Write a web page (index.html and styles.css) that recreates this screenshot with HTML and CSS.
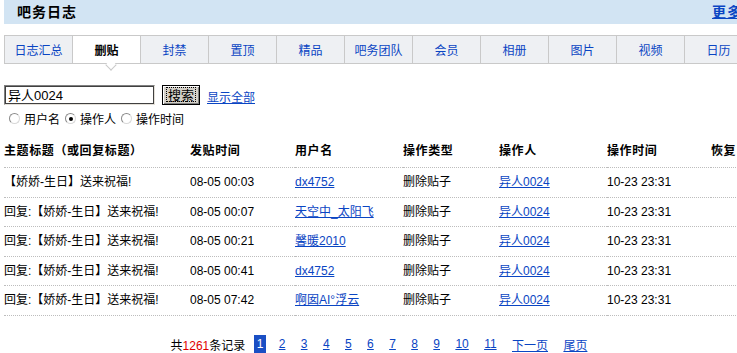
FILE: index.html
```html
<!DOCTYPE html>
<html lang="zh-CN">
<head>
<meta charset="utf-8">
<title>吧务日志</title>
<link rel="stylesheet" href="styles.css">
</head>
<body>
<div class="page">
  <div class="hd">
    <span class="hd-title">吧务日志</span>
    <a class="hd-more" href="#">更多</a>
  </div>

  <ul class="tabs">
    <li class="tab"><a href="#">日志汇总</a></li>
    <li class="tab active"><span>删贴</span><i class="caret"></i></li>
    <li class="tab"><a href="#">封禁</a></li>
    <li class="tab"><a href="#">置顶</a></li>
    <li class="tab"><a href="#">精品</a></li>
    <li class="tab"><a href="#">吧务团队</a></li>
    <li class="tab"><a href="#">会员</a></li>
    <li class="tab"><a href="#">相册</a></li>
    <li class="tab"><a href="#">图片</a></li>
    <li class="tab"><a href="#">视频</a></li>
    <li class="tab"><a href="#">日历</a></li>
  </ul>

  <form class="search">
    <div class="search-row">
      <input class="search-input" type="text" value="异人0024">
      <button class="search-btn" type="button"><span>搜索</span></button>
      <a class="show-all" href="#">显示全部</a>
    </div>
    <div class="radio-row">
      <label><input type="radio" name="t" class="radio">用户名</label>
      <label><input type="radio" name="t" class="radio" checked>操作人</label>
      <label><input type="radio" name="t" class="radio">操作时间</label>
    </div>
  </form>

  <table class="log">
    <colgroup>
      <col class="c1"><col class="c2"><col class="c3"><col class="c4"><col class="c5"><col class="c6"><col class="c7">
    </colgroup>
    <thead>
      <tr><th>主题标题（或回复标题）</th><th>发贴时间</th><th>用户名</th><th>操作类型</th><th>操作人</th><th>操作时间</th><th>恢复</th></tr>
    </thead>
    <tbody>
      <tr><td>【娇娇-生日】送来祝福!</td><td>08-05 00:03</td><td><a href="#">dx4752</a></td><td>删除贴子</td><td><a href="#">异人0024</a></td><td>10-23 23:31</td><td></td></tr>
      <tr><td>回复:【娇娇-生日】送来祝福!</td><td>08-05 00:07</td><td><a href="#">天空中_太阳飞</a></td><td>删除贴子</td><td><a href="#">异人0024</a></td><td>10-23 23:31</td><td></td></tr>
      <tr><td>回复:【娇娇-生日】送来祝福!</td><td>08-05 00:21</td><td><a href="#">馨暖2010</a></td><td>删除贴子</td><td><a href="#">异人0024</a></td><td>10-23 23:31</td><td></td></tr>
      <tr><td>回复:【娇娇-生日】送来祝福!</td><td>08-05 00:41</td><td><a href="#">dx4752</a></td><td>删除贴子</td><td><a href="#">异人0024</a></td><td>10-23 23:31</td><td></td></tr>
      <tr><td>回复:【娇娇-生日】送来祝福!</td><td>08-05 07:42</td><td><a href="#">啊囡AI°浮云</a></td><td>删除贴子</td><td><a href="#">异人0024</a></td><td>10-23 23:31</td><td></td></tr>
    </tbody>
  </table>

  <div class="pager">
    <span class="total">共<em>1261</em>条记录</span>
    <span class="cur">1</span>
    <a href="#">2</a><a href="#">3</a><a href="#">4</a><a href="#">5</a><a href="#">6</a><a href="#">7</a><a href="#">8</a><a href="#">9</a><a href="#">10</a><a href="#">11</a><a href="#">下一页</a><a href="#">尾页</a>
  </div>
</div>
</body>
</html>
```

FILE: styles.css
```css
html, body {
  margin: 0;
  padding: 0;
  background: #fff;
  overflow: hidden;
}
body {
  font-family: "Liberation Sans", "Noto Sans CJK SC", sans-serif;
  font-size: 12px;
  color: #000;
}
a {
  color: #0a45c3;
  text-decoration: underline;
}
.page {
  width: 756px;
  margin-left: 4px;
}

/* header */
.hd {
  height: 24px;
  background: #d2e4f3;
  display: flex;
  align-items: center;
  justify-content: space-between;
  padding: 0 18px 0 13px;
  box-sizing: border-box;
}
.hd-title {
  font-size: 14px;
  font-weight: bold;
  line-height: 16px;
  letter-spacing: 1px;
}
.hd-more {
  font-size: 14px;
  font-weight: bold;
  line-height: 16px;
  letter-spacing: 1px;
}

/* tabs */
.tabs {
  list-style: none;
  margin: 11px 0 0;
  padding: 0;
  display: flex;
  height: 27px;
  border-top: 1px solid #c9c9c9;
  border-bottom: 1px solid #c9c9c9;
  border-left: 1px solid #c9c9c9;
}
.tab {
  position: relative;
  width: 68px;
  flex: none;
  box-sizing: border-box;
  border-right: 1px solid #c9c9c9;
  background: #eef0f3;
  display: flex;
  align-items: center;
  justify-content: center;
  font-size: 12px;
}
.tab a {
  text-decoration: none;
}
.tab.active {
  background: #fff;
  font-weight: bold;
}
.caret {
  position: absolute;
  left: 34px;
  bottom: -6px;
  width: 7px;
  height: 7px;
  background: #fff;
  border-right: 1px solid #c9c9c9;
  border-bottom: 1px solid #c9c9c9;
  transform: rotate(45deg);
}

/* search */
.search {
  margin: 20px 0 0;
}
.search-row {
  display: flex;
  align-items: center;
  height: 21px;
}
.search-input {
  width: 151px;
  height: 20px;
  box-sizing: border-box;
  margin: 0;
  padding: 0 2px;
  font-family: "Liberation Sans", "Noto Sans CJK SC", sans-serif;
  font-size: 13px;
  border: 2px solid;
  border-color: #808080 #e4e0d8 #e4e0d8 #808080;
  outline: 1px solid #404040;
  outline-offset: -2px;
  background: #fff;
}
.search-btn {
  margin: 0 0 0 7px;
  width: 38px;
  height: 20px;
  padding: 2px;
  box-sizing: border-box;
  background: #d4d0c8;
  border: 1px solid #000;
  box-shadow: inset 1px 1px #fff, inset -1px -1px #808080;
  font-family: "Noto Sans CJK SC", sans-serif;
  font-size: 13px;
  line-height: 13px;
  display: flex;
  align-items: center;
  justify-content: center;
}
.search-btn span {
  display: block;
  border: 1px dotted #000;
  padding: 0 1px;
  line-height: 13px;
}
.show-all {
  margin-left: 7px;
  align-self: flex-end;
  line-height: 14px;
}
.radio-row {
  display: flex;
  align-items: center;
  height: 16px;
  margin-top: 5px;
}
.radio-row label {
  display: flex;
  align-items: center;
}
.radio {
  appearance: none;
  -webkit-appearance: none;
  width: 11px;
  height: 11px;
  margin: 0 4px 0 5px;
  border: 1px solid #8a8a8a;
  border-right-color: #d8d8d8;
  border-bottom-color: #d8d8d8;
  border-radius: 50%;
  background: #fff;
  position: relative;
}
.radio:checked::after {
  content: "";
  position: absolute;
  left: 3px;
  top: 3px;
  width: 4px;
  height: 4px;
  border-radius: 50%;
  background: #000;
}

/* table */
.log {
  width: 756px;
  table-layout: fixed;
  border-collapse: collapse;
  margin-top: 13px;
}
.c1 { width: 186px; }
.c2 { width: 105px; }
.c3 { width: 108px; }
.c4 { width: 96px; }
.c5 { width: 108px; }
.c6 { width: 104px; }
.log th {
  text-align: left;
  font-weight: bold;
  padding: 4px 0 8px;
  height: 16px;
  line-height: 16px;
  letter-spacing: 0.6px;
  border-bottom: 1px dotted #bdbdbd;
  white-space: nowrap;
  overflow: hidden;
}
.log td {
  height: 28.5px;
  padding: 0;
  line-height: 16px;
  vertical-align: middle;
  border-bottom: 1px dotted #bdbdbd;
  white-space: nowrap;
  overflow: hidden;
}

/* pager */
.pager {
  display: flex;
  align-items: center;
  justify-content: center;
  margin-top: 19px;
  padding-right: 6px;
  height: 19px;
  gap: 15.4px;
}
.total em {
  font-style: normal;
  color: #e00000;
}
.cur {
  background: #1a4fc4;
  color: #fff;
  height: 19px;
  line-height: 19px;
  padding: 0 3px;
  margin-left: -7px;
  margin-right: -3px;
}
```
